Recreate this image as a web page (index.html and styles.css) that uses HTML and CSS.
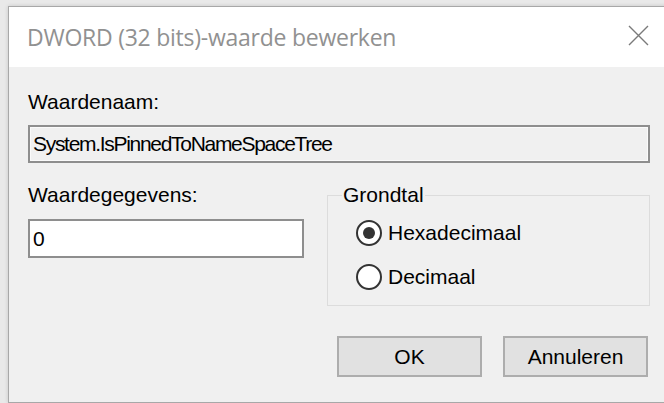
FILE: index.html
```html
<!DOCTYPE html>
<html lang="nl">
<head>
<meta charset="utf-8">
<title>DWORD (32 bits)-waarde bewerken</title>
<link rel="stylesheet" href="styles.css">
</head>
<body>
<div class="dialog">
  <div class="titlebar">
    <span class="title">DWORD (32 bits)-waarde bewerken</span>
    <button class="close" aria-label="Sluiten">
      <svg viewBox="0 0 21 21" width="21" height="21"><path d="M1 1L20 20M20 1L1 20" stroke="#7a7a7a" stroke-width="1.4" fill="none"/></svg>
    </button>
  </div>
  <div class="content">
    <label class="label">Waardenaam:</label>
    <div class="field readonly">System.IsPinnedToNameSpaceTree</div>
    <div class="row">
      <div class="data-col">
        <label class="label">Waardegegevens:</label>
        <div class="field value">0</div>
      </div>
      <fieldset class="base">
        <legend>Grondtal</legend>
        <div class="options">
          <div class="option"><span class="radio checked"></span>Hexadecimaal</div>
          <div class="option"><span class="radio"></span>Decimaal</div>
        </div>
      </fieldset>
    </div>
    <div class="actions">
      <button class="btn">OK</button>
      <button class="btn">Annuleren</button>
    </div>
  </div>
</div>
</body>
</html>
```
FILE: styles.css
```css
html, body {
  margin: 0;
  height: 100%;
  overflow: hidden;
  background: #e9e9e9;
}

body {
  padding: 6px 0 0 8px;
  box-sizing: border-box;
}

.dialog {
  width: 675px;
  height: 397px;
  box-sizing: border-box;
  border: 1px solid #a8a8a8;
  box-shadow: 0 0 4px rgba(0, 0, 0, 0.15);
  background: #f0f0f0;
  display: flex;
  flex-direction: column;
  font-family: "Liberation Sans", Arial, sans-serif;
  font-size: 21px;
  color: #000;
}

/* window caption */
.titlebar {
  flex: none;
  height: 60px;
  background: #fff;
  display: flex;
  align-items: center;
  justify-content: space-between;
  padding-left: 18px;
}

.title {
  font-family: "Open Sans", sans-serif;
  font-size: 23px;
  letter-spacing: -0.25px;
  color: #919191;
}

.close {
  width: 88px;
  height: 60px;
  border: 0;
  padding: 0;
  background: transparent;
  display: flex;
  align-items: center;
  justify-content: center;
}

.close svg {
  display: block;
  margin-bottom: 3px;
}

/* form body */
.content {
  padding: 23px 32px 0 19px;
}

.label {
  display: block;
  height: 24px;
  line-height: 24px;
}

.field {
  height: 38px;
  box-sizing: border-box;
  border: 2px solid #8e8e8e;
  padding: 0 3px;
  display: flex;
  align-items: center;
  line-height: 24px;
}

.field.readonly {
  margin-top: 11px;
  background: #f0f0f0;
  letter-spacing: -1.3px;
  box-shadow: inset 0 0 0 1px #fafafa;
}

.row {
  display: flex;
  align-items: flex-start;
  margin-top: 20px;
}

.data-col {
  width: 276px;
}

.field.value {
  margin-top: 12px;
  height: 39px;
  background: #fff;
}

/* radix group */
.base {
  margin: 0 0 0 23px;
  padding: 11px 0 13px 0;
  width: 323px;
  min-width: 0;
  box-sizing: border-box;
  border: 1px solid #dcdcdc;
}

.base legend {
  margin-left: 14px;
  padding: 0 1px;
  line-height: 24px;
}

.options {
  padding-left: 28px;
  display: flex;
  flex-direction: column;
  gap: 14px;
}

.option {
  height: 30px;
  display: flex;
  align-items: center;
  gap: 6px;
}

.radio {
  width: 26px;
  height: 26px;
  box-sizing: border-box;
  border: 2px solid #333;
  border-radius: 50%;
  background: #fff;
  display: flex;
  align-items: center;
  justify-content: center;
}

.radio.checked::after {
  content: "";
  width: 12px;
  height: 12px;
  border-radius: 50%;
  background: #333;
}

/* dialog buttons */
.actions {
  display: flex;
  justify-content: flex-end;
  gap: 21px;
  margin-top: 30px;
  padding-right: 2px;
}

.btn {
  width: 145px;
  height: 41px;
  box-sizing: border-box;
  border: 2px solid #adadad;
  background: #e1e1e1;
  padding: 0;
  font: inherit;
  color: #000;
}
```
